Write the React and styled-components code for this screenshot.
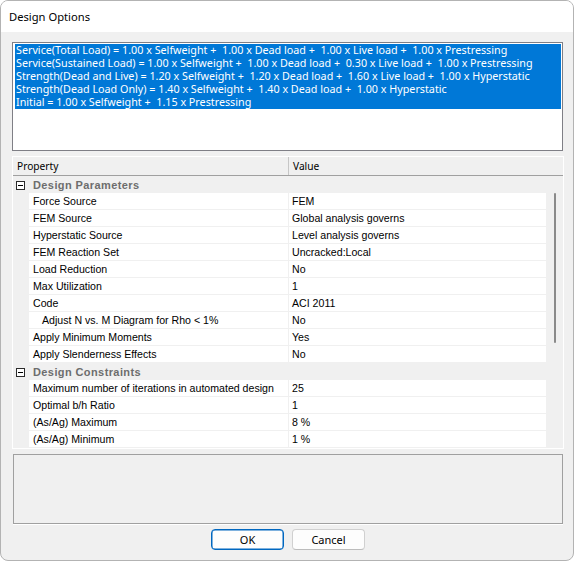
import React from 'react'
import styled, { createGlobalStyle } from 'styled-components'

const combos = [
  'Service(Total Load) = 1.00 x Selfweight +  1.00 x Dead load +  1.00 x Live load +  1.00 x Prestressing',
  'Service(Sustained Load) = 1.00 x Selfweight +  1.00 x Dead load +  0.30 x Live load +  1.00 x Prestressing',
  'Strength(Dead and Live) = 1.20 x Selfweight +  1.20 x Dead load +  1.60 x Live load +  1.00 x Hyperstatic',
  'Strength(Dead Load Only) = 1.40 x Selfweight +  1.40 x Dead load +  1.00 x Hyperstatic',
  'Initial = 1.00 x Selfweight +  1.15 x Prestressing',
]

const sections = [
  {
    title: 'Design Parameters',
    rows: [
      ['Force Source', 'FEM'],
      ['FEM Source', 'Global analysis governs'],
      ['Hyperstatic Source', 'Level analysis governs'],
      ['FEM Reaction Set', 'Uncracked:Local'],
      ['Load Reduction', 'No'],
      ['Max Utilization', '1'],
      ['Code', 'ACI 2011'],
      ['Adjust N vs. M Diagram for Rho < 1%', 'No', true],
      ['Apply Minimum Moments', 'Yes'],
      ['Apply Slenderness Effects', 'No'],
    ],
  },
  {
    title: 'Design Constraints',
    rows: [
      ['Maximum number of iterations in automated design', '25'],
      ['Optimal b/h Ratio', '1'],
      ['(As/Ag) Maximum', '8 %'],
      ['(As/Ag) Minimum', '1 %'],
    ],
  },
]

const App = () => {
  return (
    <>
      <GlobalStyle />
      <Window>
        <TitleBar>Design Options</TitleBar>
        <Client>
          <ComboList>
            <Selection>
              {combos.map(c => (
                <ComboLine key={c}>{c}</ComboLine>
              ))}
            </Selection>
          </ComboList>

          <Grid>
            <Header>
              <HeaderCell divider>Property</HeaderCell>
              <HeaderCell>Value</HeaderCell>
            </Header>
            <Body>
              <Rows>
                {sections.map(s => (
                  <React.Fragment key={s.title}>
                    <Category>
                      <Minus width="9" height="9" viewBox="0 0 9 9">
                        <rect x="0.5" y="0.5" width="8" height="8" fill="#fff" stroke="#2b2b2b" />
                        <line x1="2" y1="4.5" x2="7" y2="4.5" stroke="#000" />
                      </Minus>
                      <CategoryTitle>{s.title}</CategoryTitle>
                    </Category>
                    {s.rows.map(([name, value, sub]) => (
                      <Row key={name}>
                        <Gutter />
                        <NameCell sub={sub}>{name}</NameCell>
                        <ValueCell>{value}</ValueCell>
                      </Row>
                    ))}
                  </React.Fragment>
                ))}
              </Rows>
              <ScrollBar>
                <Thumb />
              </ScrollBar>
            </Body>
          </Grid>

          <Description />

          <Buttons>
            <Button primary>OK</Button>
            <Button>Cancel</Button>
          </Buttons>
        </Client>
      </Window>
    </>
  )
}

export default App

const GlobalStyle = createGlobalStyle`
  * { box-sizing: border-box; }
  body {
    margin: 0;
    background: #ffffff;
  }
`

const Window = styled.div`
  width: 574px;
  height: 561px;
  border: 1px solid #b3b3b3;
  border-radius: 8px;
  overflow: hidden;
  background: #f0f0f0;
  display: flex;
  flex-direction: column;
  font-family: 'Noto Sans', 'Open Sans', sans-serif;
`

const TitleBar = styled.div`
  height: 31px;
  flex: none;
  background: #ffffff;
  display: flex;
  align-items: center;
  padding-left: 8px;
  font-size: 11.2px;
  color: #000;
`

const Client = styled.div`
  flex: 1;
  display: flex;
  flex-direction: column;
  padding: 10px 9px 0 11px;
`

const ComboList = styled.div`
  height: 109px;
  margin-right: 1px;
  border: 1px solid #7f7f86;
  background: #ffffff;
  padding: 1px 1px 0 2px;
`

const Selection = styled.div`
  background: #0078d7;
  color: #ffffff;
`

const ComboLine = styled.div`
  height: 13px;
  line-height: 13px;
  font-size: 10.75px;
  padding-left: 1px;
  white-space: pre;
  overflow: hidden;
`

const Grid = styled.div`
  margin-top: 5px;
  border: 1px solid #ffffff;
  display: flex;
  flex-direction: column;
`

const Header = styled.div`
  height: 19px;
  display: flex;
  border-bottom: 1px solid #a0a0a0;
  background: #f0f0f0;
`

const HeaderCell = styled.div`
  width: ${p => (p.divider ? '276px' : 'auto')};
  flex: ${p => (p.divider ? 'none' : '1')};
  border-right: ${p => (p.divider ? '1px solid #c6c6c6' : 'none')};
  padding-left: 4px;
  font-size: 10.2px;
  line-height: 19px;
  color: #000;
`

const Body = styled.div`
  display: flex;
`

const Rows = styled.div`
  width: 533px;
  display: flex;
  flex-direction: column;
`

const Category = styled.div`
  height: 17px;
  display: flex;
  align-items: center;
  padding-left: 3px;
  background: #f0f0f0;
`

const Minus = styled.svg`
  display: block;
  margin-top: 1px;
`

const CategoryTitle = styled.span`
  margin-left: 8px;
  font-family: 'Liberation Sans', Arial, sans-serif;
  font-weight: bold;
  font-size: 11px;
  letter-spacing: 0.4px;
  color: #6d6d6d;
`

const Row = styled.div`
  height: 17px;
  display: grid;
  grid-template-columns: 16px 259px 258px;
  font-family: 'Liberation Sans', Arial, sans-serif;
  font-size: 10.6px;
  color: #000;
`

const Gutter = styled.div`
  background: #f0f0f0;
`

const NameCell = styled.div`
  background: #ffffff;
  border-bottom: 1px solid #f0f0f0;
  padding-left: ${p => (p.sub ? '13px' : '4px')};
  line-height: 16px;
  white-space: nowrap;
  overflow: hidden;
`

const ValueCell = styled.div`
  background: #ffffff;
  border-bottom: 1px solid #f0f0f0;
  border-left: 1px solid #f0f0f0;
  padding-left: 3px;
  line-height: 16px;
  white-space: nowrap;
`

const ScrollBar = styled.div`
  width: 17px;
  background: #f0f0f0;
  padding: 17px 0 0 8px;
`

const Thumb = styled.div`
  width: 2px;
  height: 150px;
  border-radius: 1px;
  background: #8a8a8a;
`

const Description = styled.div`
  margin: 5px 1px 0;
  height: 70px;
  border: 1px solid #a0a0a0;
  box-shadow: 0 1px 0 #ffffff;
`

const Buttons = styled.div`
  margin-top: 5px;
  display: flex;
  justify-content: center;
  gap: 8px;
`

const Button = styled.button`
  width: 73px;
  height: 21px;
  padding: 0;
  border-radius: 4px;
  background: #fdfdfd;
  border: 1px solid ${p => (p.primary ? '#0067c0' : '#d0d0d0')};
  border-bottom-color: ${p => (p.primary ? '#0067c0' : '#bcbcbc')};
  box-shadow: ${p => (p.primary ? 'inset 0 0 0 0.5px #0067c0' : 'none')};
  font-family: 'Noto Sans', 'Open Sans', sans-serif;
  font-size: 11px;
  color: #000;
`
